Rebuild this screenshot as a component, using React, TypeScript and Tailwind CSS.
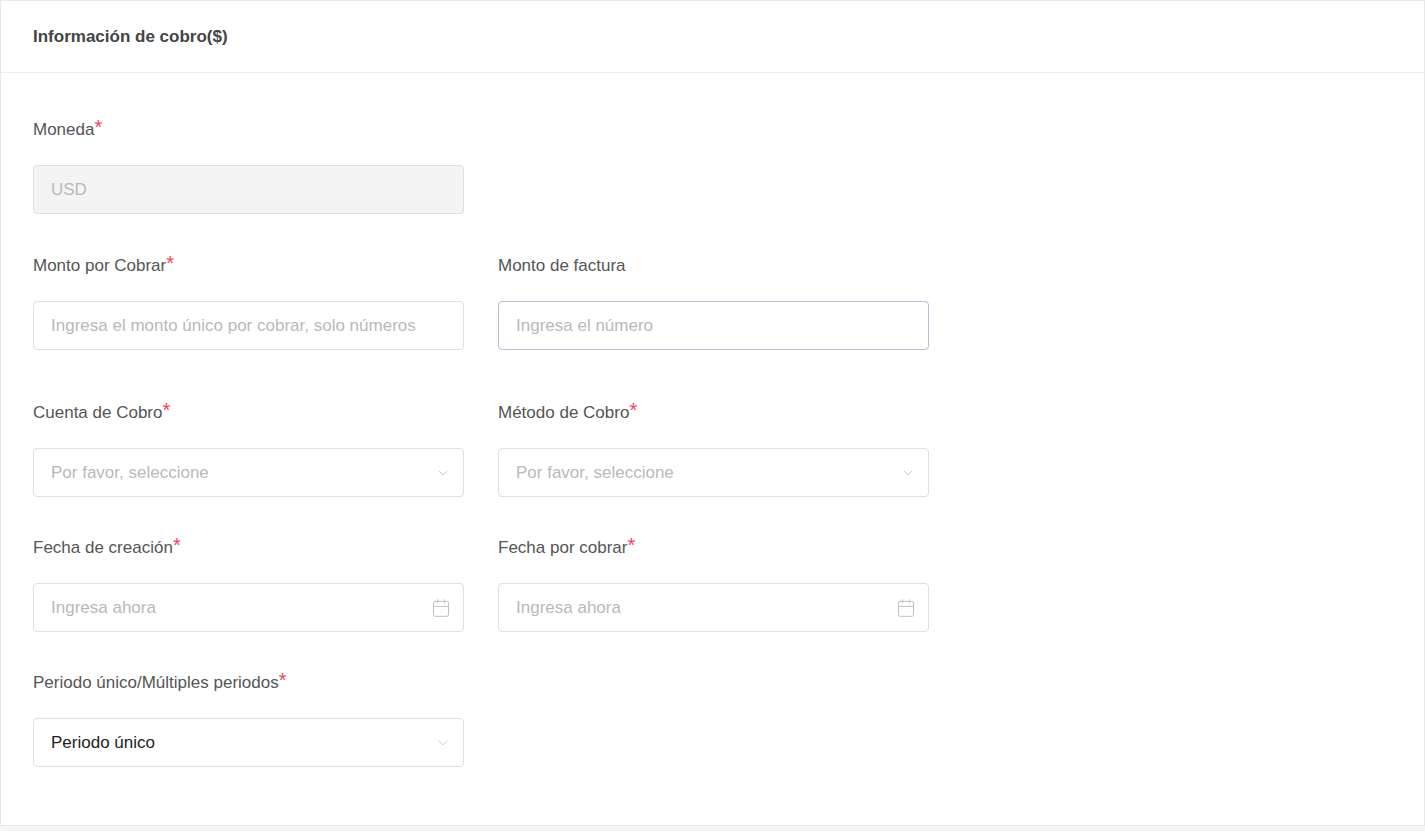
import { ChevronDown, Calendar } from "lucide-react";

const font = { fontFamily: '"Liberation Sans", Arial, sans-serif' };

function Label({ text, req }: { text: string; req?: boolean }) {
  return (
    <div className="h-5 leading-5 text-[17px] text-[#555] mb-[25px] flex items-start">
      {text}
      {req && <span className="text-[#f0445e] text-[20px] leading-[14px]">*</span>}
    </div>
  );
}

function Field({
  text,
  kind = "input",
  border = "border-[#dcdfe6]",
}: {
  text: string;
  kind?: "input" | "select" | "date" | "disabled" | "value";
  border?: string;
}) {
  const bg = kind === "disabled" ? "bg-[#f4f4f4]" : "bg-white";
  const color = kind === "value" ? "text-[#222]" : "text-[#b9b9b9]";
  return (
    <div className={`w-[431px] h-[49px] rounded border ${border} ${bg} flex items-center pl-[17px] pr-[12px]`}>
      <span className={`flex-1 truncate text-[17px] ${color}`}>{text}</span>
      {(kind === "select" || kind === "value") && (
        <ChevronDown className="w-4 h-4 text-[#c0c0c0]" strokeWidth={1.2} />
      )}
      {kind === "date" && <Calendar className="w-5 h-5 text-[#c0c0c0]" strokeWidth={1.2} />}
    </div>
  );
}

export default function App() {
  return (
    <div className="w-[1425px] h-[831px] bg-[#f4f5f7]" style={font}>
      <div className="h-[826px] bg-white border border-[#e8e8e8]">
        <div className="h-[72px] border-b border-[#ececec] flex items-center pl-8">
          <h2 className="text-[17px] font-bold text-[#444]">Información de cobro($)</h2>
        </div>
        <div className="pl-8 pt-[47px]">
          <Label text="Moneda" req />
          <Field text="USD" kind="disabled" />

          <div className="flex gap-[34px] mt-[42px]">
            <div>
              <Label text="Monto por Cobrar" req />
              <Field text="Ingresa el monto único por cobrar, solo números" />
            </div>
            <div>
              <Label text="Monto de factura" />
              <Field text="Ingresa el número" border="border-[#b3c0d6]" />
            </div>
          </div>

          <div className="flex gap-[34px] mt-[53px]">
            <div>
              <Label text="Cuenta de Cobro" req />
              <Field text="Por favor, seleccione" kind="select" />
            </div>
            <div>
              <Label text="Método de Cobro" req />
              <Field text="Por favor, seleccione" kind="select" />
            </div>
          </div>

          <div className="flex gap-[34px] mt-[41px]">
            <div>
              <Label text="Fecha de creación" req />
              <Field text="Ingresa ahora" kind="date" />
            </div>
            <div>
              <Label text="Fecha por cobrar" req />
              <Field text="Ingresa ahora" kind="date" />
            </div>
          </div>

          <div className="mt-[41px]">
            <Label text="Periodo único/Múltiples periodos" req />
            <Field text="Periodo único" kind="value" />
          </div>
        </div>
      </div>
    </div>
  );
}
